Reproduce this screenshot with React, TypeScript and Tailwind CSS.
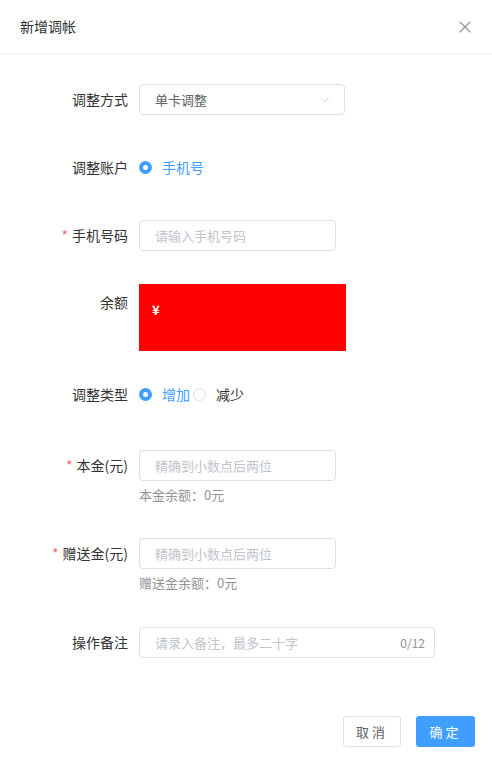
import { X, ChevronDown } from 'lucide-react';

function Label({ text, required }: { text: string; required?: boolean }) {
  return (
    <div className="w-[139px] shrink-0 pr-[11px] text-right text-[14px] leading-[31px] text-[#333]">
      {required && <span className="mr-[4px] text-[#f56c6c]">*</span>}
      {text}
    </div>
  );
}

function Radio({ checked, label }: { checked?: boolean; label: string }) {
  return (
    <label className="flex items-center">
      {checked ? (
        <span className="flex h-[13px] w-[13px] items-center justify-center rounded-full bg-[#409eff]">
          <span className="h-[5px] w-[5px] rounded-full bg-white" />
        </span>
      ) : (
        <span className="h-[13px] w-[13px] rounded-full border border-[#dcdfe6] bg-white" />
      )}
      <span className={`ml-[10px] text-[14px] ${checked ? 'text-[#409eff]' : 'text-[#333]'}`}>{label}</span>
    </label>
  );
}

function TextInput({ placeholder, width }: { placeholder: string; width: string }) {
  return (
    <div className={`${width} flex h-[31px] items-center rounded-[4px] border border-[#dcdfe6] px-[15px] text-[13px] text-[#c0c4cc]`}>
      {placeholder}
    </div>
  );
}

export default function App() {
  return (
    <div
      className="h-[761px] w-[492px] bg-white"
      style={{ fontFamily: '"Noto Sans CJK SC", "Noto Sans", sans-serif' }}
    >
      <div className="flex h-[54px] items-center justify-between border-b border-[#f0f0f0] pl-[20px] pr-[17px]">
        <span className="text-[14px] text-[#303133]">新增调帐</span>
        <X size={20} strokeWidth={1.4} className="text-[#909399]" />
      </div>

      <div className="pt-[30px]">
        <div className="flex">
          <Label text="调整方式" />
          <div className="flex h-[31px] w-[206px] items-center justify-between rounded-[4px] border border-[#dcdfe6] pl-[15px] pr-[12px] text-[13px] text-[#606266]">
            <span>单卡调整</span>
            <ChevronDown size={14} strokeWidth={1.2} className="text-[#c0c4cc]" />
          </div>
        </div>

        <div className="mt-[37px] flex">
          <Label text="调整账户" />
          <div className="flex h-[31px] items-center">
            <Radio checked label="手机号" />
          </div>
        </div>

        <div className="mt-[37px] flex">
          <Label text="手机号码" required />
          <TextInput placeholder="请输入手机号码" width="w-[197px]" />
        </div>

        <div className="mt-[33px] flex">
          <div className="pt-[3px]">
            <Label text="余额" />
          </div>
          <div className="h-[67px] w-[207px] bg-[#ff0000] pl-[13px] pt-[16px] text-[13px] font-bold text-white">
            ¥
          </div>
        </div>

        <div className="mt-[28px] flex">
          <Label text="调整类型" />
          <div className="flex h-[31px] items-center gap-[3px]">
            <Radio checked label="增加" />
            <Radio label="减少" />
          </div>
        </div>

        <div className="mt-[40px] flex">
          <Label text="本金(元)" required />
          <div>
            <TextInput placeholder="精确到小数点后两位" width="w-[197px]" />
            <div className="mt-[4px] text-[13px] leading-[20px] text-[#909399]">本金余额：0元</div>
          </div>
        </div>

        <div className="mt-[33px] flex">
          <Label text="赠送金(元)" required />
          <div>
            <TextInput placeholder="精确到小数点后两位" width="w-[197px]" />
            <div className="mt-[4px] text-[13px] leading-[20px] text-[#909399]">赠送金余额：0元</div>
          </div>
        </div>

        <div className="mt-[34px] flex">
          <Label text="操作备注" />
          <div className="flex h-[31px] w-[296px] items-center justify-between rounded-[4px] border border-[#dcdfe6] pl-[15px] pr-[9px]">
            <span className="text-[13px] text-[#c0c4cc]">请录入备注，最多二十字</span>
            <span className="text-[12px] text-[#909399]">0/12</span>
          </div>
        </div>
      </div>

      <div className="mt-[58px] flex justify-end gap-[15px] pr-[17px]">
        <button className="h-[31px] w-[58px] rounded-[3px] border border-[#dcdfe6] bg-white text-[13px] tracking-[3px] text-[#606266]">
          取消
        </button>
        <button className="h-[31px] w-[59px] rounded-[3px] bg-[#409eff] text-[13px] tracking-[3px] text-white">
          确定
        </button>
      </div>
    </div>
  );
}
